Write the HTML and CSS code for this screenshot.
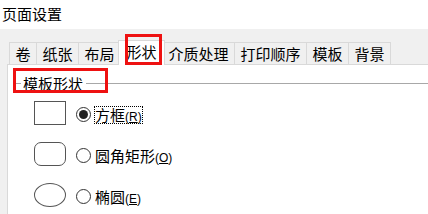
FILE: index.html
```html
<!DOCTYPE html>
<html lang="zh-CN">
<head>
    <meta charset="UTF-8">
    <title>页面设置</title>
    <link rel="stylesheet" href="styles.css">
</head>
<body>
    <div class="title">页面设置</div>

    <div class="dialog">
        <div class="tabs">
            <div class="tab">卷</div>
            <div class="tab">纸张</div>
            <div class="tab">布局</div>
            <div class="tab active">形状<span class="mark mark-tab"></span></div>
            <div class="tab">介质处理</div>
            <div class="tab">打印顺序</div>
            <div class="tab">模板</div>
            <div class="tab last">背景</div>
        </div>

        <div class="panel">
            <div class="group-head">
                <span class="group-label">模板形状</span>
                <span class="mark mark-group"></span>
            </div>

            <div class="options">
                <div class="option">
                    <span class="shape shape-rect"></span>
                    <span class="radio checked"></span>
                    <span class="label focus">方框<span class="key">(<u>R</u>)</span></span>
                </div>
                <div class="option">
                    <span class="shape shape-round"></span>
                    <span class="radio"></span>
                    <span class="label">圆角矩形<span class="key">(<u>O</u>)</span></span>
                </div>
                <div class="option">
                    <span class="shape shape-ellipse"></span>
                    <span class="radio"></span>
                    <span class="label">椭圆<span class="key">(<u>E</u>)</span></span>
                </div>
            </div>
        </div>
    </div>
</body>
</html>
```

FILE: styles.css
```css
body {
    margin: 0;
    background-color: #fff;
    color: #000;
    font-family: "Noto Sans CJK SC", "Noto Sans", sans-serif;
    font-size: 15px;
    overflow: hidden;
}
.title {
    height: 29px;
    line-height: 28px;
    padding-left: 2px;
}
.dialog {
    background-color: #f0f0f0;
    padding: 13px 0 0 7px;
}
.tabs {
    display: flex;
    align-items: flex-end;
    margin-left: 2px;
    height: 22px;
}
.tab {
    box-sizing: border-box;
    height: 22px;
    line-height: 21px;
    padding: 0 5.5px;
    border-top: 1px solid #d9d9d9;
    border-left: 1px solid #d9d9d9;
    background-color: #f0f0f0;
}
.tab.last {
    border-right: 1px solid #d9d9d9;
}
.tab.active {
    position: relative;
    z-index: 1;
    height: 25px;
    line-height: 22px;
    margin: 0 -2px -1px -2px;
    padding: 0 7.5px;
    background-color: #fff;
    border-right: 1px solid #d9d9d9;
}
.tab.active + .tab {
    border-left: none;
}
.panel {
    position: relative;
    height: 141px;
    background-color: #fff;
    border-top: 1px solid #d9d9d9;
    border-left: 1px solid #d9d9d9;
    padding-top: 8px;
}
.mark {
    position: absolute;
    box-sizing: border-box;
    border: 3px solid #ee1111;
}
.mark-tab {
    left: 6px;
    top: -7px;
    width: 37px;
    height: 31px;
}
/* group box caption sits on its top line */
.group-head {
    position: relative;
    height: 20px;
    margin-left: 7px;
    background: linear-gradient(#a8a8a8, #a8a8a8) no-repeat 0 10px / 100% 1px;
}
.group-label {
    display: inline-block;
    margin-left: 6px;
    padding: 0 3px 0 2px;
    line-height: 20px;
    background-color: #fff;
}
.mark-group {
    left: -2px;
    top: -5px;
    width: 95px;
    height: 25px;
}
.options {
    display: flex;
    flex-direction: column;
    gap: 17px;
    margin-top: 8px;
    padding-left: 26px;
}
.option {
    display: flex;
    align-items: center;
    height: 24px;
}
.shape {
    box-sizing: border-box;
    width: 32px;
    height: 24px;
    border: 1px solid #555;
    background-color: #fff;
}
.shape-round {
    border-radius: 7px;
}
.shape-ellipse {
    border-radius: 50%;
}
.radio {
    position: relative;
    box-sizing: border-box;
    width: 15px;
    height: 15px;
    margin: 2px 0 0 10px;
    border: 1px solid #333;
    border-radius: 50%;
}
.radio.checked::after {
    content: "";
    position: absolute;
    left: 2px;
    top: 2px;
    width: 9px;
    height: 9px;
    border-radius: 50%;
    background-color: #222;
}
.label {
    height: 16px;
    margin: 4px 0 0 4px;
    line-height: 16px;
    white-space: nowrap;
}
.focus {
    outline: 1px dotted #000;
    outline-offset: 0;
}
.key {
    font-family: "Liberation Sans", "DejaVu Sans", sans-serif;
    font-size: 12px;
}
```
